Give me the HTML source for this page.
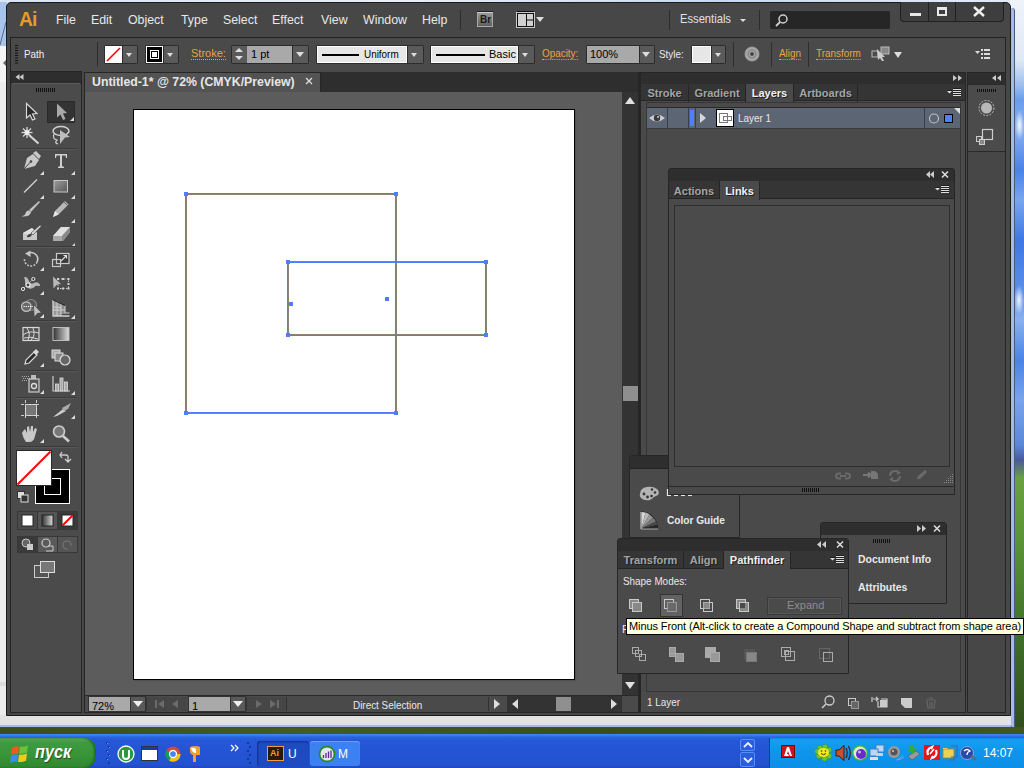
<!DOCTYPE html>
<html><head><meta charset="utf-8">
<style>
*{margin:0;padding:0;box-sizing:border-box}
html,body{width:1024px;height:768px;overflow:hidden;position:relative;font-family:"Liberation Sans",sans-serif;background:#ececec}
.a{position:absolute}
.t{position:absolute;white-space:nowrap;line-height:1}
.menu{color:#e8e8e8;font-size:13px;top:13px}
.orange{color:#f0a040;font-size:11px;border-bottom:1px dotted #f0a040;line-height:11px}
.cw{color:#eee;font-size:11px}
.dd{background:#565656;border:1px solid #2e2e2e}
.tri{width:0;height:0;border-left:5px solid transparent;border-right:5px solid transparent;border-top:6px solid #e0e0e0}
.n9{transform:scaleX(.9);transform-origin:0 0}
.n95{transform:scaleX(.95);transform-origin:0 0}
.tab{position:absolute;font-weight:bold;font-size:11px;color:#a4a4a4;text-align:center;line-height:18px;border-right:1px solid #262626;text-shadow:1px 1px 0 #1e1e1e}
.tab.act{color:#f0f0f0;background:#4a4a4a}
</style></head><body>
<!-- desktop bits -->
<div class="a" style="left:0;top:0;width:1024px;height:3px;background:linear-gradient(90deg,#d8e4f4,#e8eef8 40%,#c8d8f0 70%,#e4ecf8)"></div>
<div class="a" style="left:0;top:2px;width:7px;height:44px;background:#a9c4ea"></div>
<div class="a" style="left:0;top:46px;width:7px;height:36px;background:#f4f4f4"></div>
<div class="a" style="left:3px;top:59px;width:0;height:0;border-top:4px solid transparent;border-bottom:4px solid transparent;border-right:4px solid #6a6a6a"></div>
<svg class="a" style="left:0;top:20px" width="7" height="26"><line x1="0" y1="25" x2="6" y2="2" stroke="#5a6a8a" stroke-width="1"/></svg>
<div class="a" style="left:0;top:682px;width:7px;height:4px;background:#dcdcdc"></div>
<div class="a" style="left:1010px;top:0;width:14px;height:734px;background:linear-gradient(180deg,#eef3fa 0,#dfe9f6 60px,#9ec0f0 85px,#6a9cec 100px,#8ab0f0 130px,#4a82e8 170px,#7aa6ee 200px,#3f78e4 240px,#5a8ee8 290px,#8ab0ee 320px,#4a84e6 360px,#7aa4ec 400px,#5a88d8 445px,#4a5a9a 460px,#6aa040 478px,#5a9438 540px,#44742a 620px,#2f4c1c 734px)"></div>
<div class="a" style="left:1015px;top:110px;width:9px;height:30px;background:radial-gradient(#f6f9ff,transparent 70%)"></div>
<div class="a" style="left:1014px;top:285px;width:10px;height:30px;background:radial-gradient(#f0f6ff,transparent 70%)"></div>
<div class="a" style="left:1010px;top:8px;width:5px;height:721px;background:#a6b8ec;border-right:1px solid #4a5a7a;border-radius:0 3px 3px 0"></div>
<div class="a" style="left:0;top:727px;width:1024px;height:7px;background:linear-gradient(90deg,#34501f,#3f5e24 30%,#33501d 60%,#3a5a22)"></div>
<div class="a" style="left:0;top:715px;width:1011px;height:10px;background:#e2e2e2"></div>
<div class="a" style="left:0;top:725px;width:1012px;height:3px;background:#a6b8ec;border-bottom:1px solid #3a4a6a;border-radius:0 0 3px 0"></div>

<!-- app window frame -->
<div class="a" style="left:6px;top:2px;width:1005px;height:714px;background:#474747;border:1px solid #1a1a1a;border-radius:5px 5px 0 0"></div>

<!-- menu bar -->
<div class="t" style="left:19px;top:8px;font-size:21px;font-weight:bold;color:#e69a2a;letter-spacing:-1px;transform:scaleX(.92);transform-origin:0 0">Ai</div>
<div class="t menu n95" style="left:56px">File</div>
<div class="t menu n95" style="left:91px">Edit</div>
<div class="t menu n95" style="left:128px">Object</div>
<div class="t menu n95" style="left:181px">Type</div>
<div class="t menu n95" style="left:223px">Select</div>
<div class="t menu n95" style="left:272px">Effect</div>
<div class="t menu n95" style="left:321px">View</div>
<div class="t menu n95" style="left:363px">Window</div>
<div class="t menu n95" style="left:422px">Help</div>

<!-- control bar -->
<div class="a" style="left:10px;top:37px;width:996px;height:35px;background:#4a4a4a;border:1px solid #232323;border-bottom:none"></div>


<!-- menubar right -->
<div class="a" style="left:460px;top:10px;width:1px;height:20px;background:#2c2c2c"></div>
<div class="a" style="left:477px;top:12px;width:16px;height:15px;background:linear-gradient(#9a9a9a,#5e5e5e);border:1px solid #aaa;border-top-color:#ccc;box-shadow:0 -1px 0 #222"></div>
<div class="t" style="left:480px;top:15px;font-size:10px;font-weight:bold;color:#1a1a1a">Br</div>
<svg class="a" style="left:516px;top:11px" width="19" height="17"><rect x="1" y="0" width="17" height="1" fill="#111"/><rect x="0" y="1" width="19" height="16" fill="#c8c8c8"/><rect x="1" y="2" width="17" height="14" fill="#111"/><rect x="2" y="3" width="8" height="12" fill="#d0d0d0"/><rect x="11" y="3" width="6" height="5.5" fill="#d0d0d0"/><rect x="11" y="9.5" width="6" height="5.5" fill="#d0d0d0"/></svg>
<div class="a tri" style="left:536px;top:17px;border-width:5px 4px 0 4px;border-top-color:#ddd"></div>
<div class="a" style="left:669px;top:10px;width:1px;height:20px;background:#2c2c2c"></div>
<div class="t" style="left:680px;top:12px;font-size:13px;color:#e0e0e0;transform:scaleX(.86);transform-origin:0 0">Essentials</div>
<div class="a tri" style="left:740px;top:19px;border-width:3px 3px 0 3px;border-top-color:#ddd"></div>
<div class="a" style="left:759px;top:10px;width:1px;height:20px;background:#2c2c2c"></div>
<div class="a" style="left:770px;top:11px;width:120px;height:18px;background:#262626;border-radius:2px"></div>
<svg class="a" style="left:773px;top:12px" width="16" height="16"><circle cx="10" cy="7" r="4" fill="none" stroke="#cfcfcf" stroke-width="1.5"/><line x1="7" y1="10" x2="3" y2="14" stroke="#cfcfcf" stroke-width="1.8"/></svg>
<div class="a" style="left:900px;top:2px;width:104px;height:20px;background:#3e3e3e;border:1px solid #202020;border-top:none;border-radius:0 0 4px 4px"></div>
<div class="a" style="left:928px;top:2px;width:1px;height:19px;background:#202020"></div>
<div class="a" style="left:955px;top:2px;width:1px;height:19px;background:#202020"></div>
<div class="a" style="left:910px;top:13px;width:11px;height:3px;background:#e8e8e8"></div>
<div class="a" style="left:937px;top:7px;width:10px;height:9px;border:2px solid #e8e8e8;border-top-width:3px"></div>
<svg class="a" style="left:973px;top:6px" width="12" height="11"><path d="M1 1 L11 10 M11 1 L1 10" stroke="#eee" stroke-width="2.4"/></svg>

<!-- control bar content -->
<svg class="a" style="left:15px;top:45px" width="3" height="21"><g fill="#111"><rect y="0" width="3" height="1"/><rect y="2.5" width="3" height="1"/><rect y="5" width="3" height="1"/><rect y="7.5" width="3" height="1"/><rect y="10" width="3" height="1"/><rect y="12.5" width="3" height="1"/><rect y="15" width="3" height="1"/><rect y="17.5" width="3" height="1"/></g></svg>
<div class="t cw n9" style="left:24px;top:49px">Path</div>
<div class="a" style="left:97px;top:42px;width:1px;height:25px;background:#2e2e2e"></div>
<div class="a" style="left:104px;top:45px;width:34px;height:19px;background:#2c2c2c;border-radius:2px"></div>
<div class="a" style="left:105px;top:46px;width:17px;height:17px;background:#fff"></div>
<svg class="a" style="left:105px;top:46px" width="17" height="17"><line x1="2" y1="15" x2="15" y2="2" stroke="#f00" stroke-width="1.6"/></svg>
<div class="a" style="left:123px;top:46px;width:14px;height:17px;background:#5a5a5a"></div>
<div class="a tri" style="left:126px;top:53px;border-width:4px 3.5px 0 3.5px;border-top-color:#ddd"></div>
<div class="a" style="left:145px;top:45px;width:34px;height:19px;background:#2c2c2c;border-radius:2px"></div>
<div class="a" style="left:146px;top:46px;width:17px;height:17px;background:#000;border:1px solid #fff"></div>
<div class="a" style="left:150px;top:50px;width:9px;height:9px;border:1px solid #fff;background:#000"></div>
<div class="a" style="left:152px;top:52px;width:5px;height:5px;background:#fff"></div>
<div class="a" style="left:164px;top:46px;width:14px;height:17px;background:#5a5a5a"></div>
<div class="a tri" style="left:167px;top:53px;border-width:4px 3.5px 0 3.5px;border-top-color:#ddd"></div>
<div class="t orange" style="left:191px;top:48px">Stroke:</div>
<div class="a" style="left:231px;top:45px;width:78px;height:19px;background:#2c2c2c;border-radius:2px"></div>
<div class="a" style="left:232px;top:46px;width:15px;height:17px;background:#5a5a5a"></div>
<div class="a" style="left:235px;top:48px;width:0;height:0;border-left:4px solid transparent;border-right:4px solid transparent;border-bottom:4px solid #ddd"></div>
<div class="a tri" style="left:235px;top:56px;border-width:4px 4px 0 4px;border-top-color:#ddd"></div>
<div class="a" style="left:247px;top:46px;width:45px;height:17px;background:#a9a9a9"></div>
<div class="t" style="left:251px;top:49px;font-size:11px;color:#000">1 pt</div>
<div class="a" style="left:293px;top:46px;width:15px;height:17px;background:#5a5a5a"></div>
<div class="a tri" style="left:296px;top:52px;border-width:5px 4.5px 0 4.5px;border-top-color:#ddd"></div>
<div class="a" style="left:316px;top:45px;width:108px;height:19px;background:#2c2c2c;border-radius:2px"></div>
<div class="a" style="left:317px;top:46px;width:90px;height:17px;background:#e6e6e6;border:1px solid #fff"></div>
<div class="a" style="left:322px;top:54px;width:37px;height:2px;background:#000"></div>
<div class="t n9" style="left:364px;top:49px;font-size:11px;color:#000">Uniform</div>
<div class="a" style="left:408px;top:46px;width:15px;height:17px;background:#5a5a5a"></div>
<div class="a tri" style="left:411px;top:53px;border-width:4px 3.5px 0 3.5px;border-top-color:#ddd"></div>
<div class="a" style="left:430px;top:45px;width:105px;height:19px;background:#2c2c2c;border-radius:2px"></div>
<div class="a" style="left:431px;top:46px;width:87px;height:17px;background:#e6e6e6;border:1px solid #fff"></div>
<div class="a" style="left:436px;top:54px;width:49px;height:2px;background:#000"></div>
<div class="t" style="left:489px;top:49px;font-size:11px;color:#000">Basic</div>
<div class="a" style="left:519px;top:46px;width:15px;height:17px;background:#5a5a5a"></div>
<div class="a tri" style="left:522px;top:53px;border-width:4px 3.5px 0 3.5px;border-top-color:#ddd"></div>
<div class="t orange n9" style="left:542px;top:48px">Opacity:</div>
<div class="a" style="left:586px;top:45px;width:69px;height:19px;background:#2c2c2c;border-radius:2px"></div>
<div class="a" style="left:587px;top:46px;width:52px;height:17px;background:#a9a9a9"></div>
<div class="t" style="left:590px;top:49px;font-size:11px;color:#000">100%</div>
<div class="a" style="left:640px;top:46px;width:14px;height:17px;background:#5a5a5a"></div>
<div class="a tri" style="left:642px;top:52px;border-width:5px 4.5px 0 4.5px;border-top-color:#ddd"></div>
<div class="t cw n9" style="left:659px;top:49px;color:#e8e8e8">Style:</div>
<div class="a" style="left:691px;top:45px;width:35px;height:19px;background:#2c2c2c;border-radius:2px"></div>
<div class="a" style="left:692px;top:46px;width:19px;height:17px;background:#e6e6e6;border:1px solid #fff"></div>
<div class="a" style="left:712px;top:46px;width:13px;height:17px;background:#5a5a5a"></div>
<div class="a tri" style="left:715px;top:53px;border-width:4px 3.5px 0 3.5px;border-top-color:#ddd"></div>
<div class="a" style="left:733px;top:42px;width:1px;height:25px;background:#2e2e2e"></div>
<svg class="a" style="left:744px;top:46px" width="16" height="16"><defs><radialGradient id="rc"><stop offset="0" stop-color="#fff"/><stop offset=".5" stop-color="#888"/><stop offset="1" stop-color="#bbb"/></radialGradient></defs><circle cx="8" cy="8" r="7" fill="url(#rc)" stroke="#999"/><circle cx="8" cy="8" r="2" fill="#444"/></svg>
<div class="a" style="left:771px;top:42px;width:1px;height:25px;background:#2e2e2e"></div>
<div class="t orange n9" style="left:779px;top:48px">Align</div>
<div class="a" style="left:808px;top:42px;width:1px;height:25px;background:#2e2e2e"></div>
<div class="t orange n9" style="left:816px;top:48px">Transform</div>
<svg class="a" style="left:871px;top:46px" width="20" height="16"><rect x="1" y="5" width="6" height="6" fill="none" stroke="#bbb"/><rect x="10" y="1" width="8" height="7" fill="#888" stroke="#bbb"/><path d="M6 3 L14 11 L11 11 L13 15 L11 15 L9 12 L7 14 Z" fill="#ccc"/></svg>
<div class="a tri" style="left:894px;top:52px;border-width:6px 4.5px 0 4.5px;border-top-color:#ddd"></div>
<svg class="a" style="left:975px;top:48px" width="16" height="12"><path d="M0 3 L5 3 L2.5 6 Z" fill="#ddd"/><rect x="6" y="1" width="2" height="2" fill="#ddd"/><rect x="6" y="5" width="2" height="2" fill="#ddd"/><rect x="6" y="9" width="2" height="2" fill="#ddd"/><rect x="9" y="1" width="6" height="2" fill="#ddd"/><rect x="9" y="5" width="6" height="2" fill="#ddd"/><rect x="9" y="9" width="6" height="2" fill="#ddd"/></svg>

<!-- tools panel -->
<div class="a" style="left:10px;top:71px;width:72px;height:642px;background:#4b4b4b;border:1px solid #262626"></div>
<div class="a" style="left:11px;top:72px;width:70px;height:12px;background:#2e2e2e"></div>


<div class="a" style="left:12px;top:83px;width:68px;height:1px;background:#5a5a5a"></div>
<div class="a" style="left:47px;top:101px;width:28px;height:22px;background:#333;border:1px solid #2a2a2a"></div>
<svg class="a" style="left:0;top:0" width="90" height="600">
<defs><linearGradient id="gr1" x1="0" y1="0" x2="1" y2="1"><stop offset="0" stop-color="#9a9a9a"/><stop offset="1" stop-color="#5a5a5a"/></linearGradient>
<linearGradient id="gr2" x1="0" y1="0" x2="1" y2="0"><stop offset="0" stop-color="#333"/><stop offset="1" stop-color="#ddd"/></linearGradient></defs>
<g fill="#111"><rect x="36" y="88" width="1" height="4"/><rect x="38" y="88" width="1" height="4"/><rect x="40" y="88" width="1" height="4"/><rect x="42" y="88" width="1" height="4"/><rect x="44" y="88" width="1" height="4"/><rect x="46" y="88" width="1" height="4"/><rect x="48" y="88" width="1" height="4"/><rect x="50" y="88" width="1" height="4"/><rect x="52" y="88" width="1" height="4"/><rect x="54" y="88" width="1" height="4"/></g>
<path d="M15.5 77 L19.5 74 L19.5 80 Z M19.5 77 L23.5 74 L23.5 80 Z" fill="#ccc"/>
<!-- selection -->
<path d="M26.5 103.5 L37 113.5 L32.5 114 L35 119 L32.5 120 L30 115 L26.5 118 Z" fill="#2a2a2a" stroke="#d8d8d8" stroke-width="1.2"/>
<path d="M57 103.5 L67 113 L63 113.5 L65.5 119 L63 120 L60.5 114.5 L57 117.5 Z" fill="#a8a8a8"/>
<path d="M70 121 L74 117 L74 121 Z" fill="#ddd"/>
<!-- magic wand -->
<g stroke="#d8d8d8" stroke-width="1.3"><line x1="29" y1="135" x2="38.5" y2="143.5" stroke-width="2"/><line x1="27" y1="127" x2="27" y2="138"/><line x1="21.5" y1="132.5" x2="32.5" y2="132.5"/><line x1="23" y1="128.5" x2="31" y2="136.5"/><line x1="31" y1="128.5" x2="23" y2="136.5"/></g>
<circle cx="27" cy="132.5" r="2.5" fill="#eee"/>
<!-- lasso -->
<ellipse cx="61" cy="131" rx="8" ry="4.5" fill="none" stroke="#d0d0d0" stroke-width="1.5"/>
<path d="M54 134 Q52 139 57 140 Q54 143 58 144" fill="none" stroke="#d0d0d0" stroke-width="1.2"/>
<path d="M60 130 L70 137 L65 137.5 L60 144 Z" fill="#bdbdbd"/>
<rect x="16" y="148" width="60" height="1" fill="#3a3a3a"/><rect x="16" y="149" width="60" height="1" fill="#575757"/>
<!-- pen -->
<path d="M24 169 L27 158 L33 154 L39 160 L35 166 Z" fill="#c8c8c8"/><path d="M33 153 L36 151 L41 156 L39 159 Z" fill="#c8c8c8"/>
<path d="M24 169 L30.5 162" stroke="#444" stroke-width="1"/><circle cx="31" cy="161.5" r="1.3" fill="#444"/>
<path d="M40 175 L44 171 L44 175 Z" fill="#ddd"/>
<!-- type -->
<path d="M55 154 L67 154 L67 158 L66 158 L65.5 155.5 L62 155.5 L62 166 L64 167 L64 168 L58 168 L58 167 L60 166 L60 155.5 L56.5 155.5 L56 158 L55 158 Z" fill="#cfcfcf"/>
<path d="M71 175 L75 171 L75 175 Z" fill="#ddd"/>
<!-- line -->
<line x1="24" y1="192.5" x2="37" y2="179.5" stroke="#cfcfcf" stroke-width="1.5"/>
<path d="M40 199 L44 195 L44 199 Z" fill="#ddd"/>
<!-- rect -->
<rect x="54" y="180.5" width="13.5" height="11.5" fill="url(#gr1)" stroke="#c8c8c8" stroke-width="1"/>
<path d="M71 199 L75 195 L75 199 Z" fill="#ddd"/>
<!-- brush -->
<path d="M29 210 L39 201 L40 202 L31 212 Z" fill="#c0c0c0"/><path d="M22 216 Q25 216 26 212 Q28 209 31 212 Q30 217 22 216.5 Z" fill="#c8c8c8"/>
<!-- pencil -->
<path d="M53 217 L55 211 L65 201 L68.5 204.5 L58.5 214.5 Z" fill="#b8b8b8"/><path d="M53 217 L55 211 L58.5 214.5 Z" fill="#e8e8e8"/><path d="M64 202 L67.5 205.5" stroke="#666"/>
<path d="M71 223 L75 219 L75 223 Z" fill="#ddd"/>
<!-- blob brush -->
<path d="M23 233 L32 228 L37 233 L37 240 L23 240 Z" fill="#c8c8c8"/><path d="M23 233 L32 228 L37 233 L32 236 Z" fill="#e0e0e0"/>
<path d="M31 233 L40 225 L41.5 226 L33 235 Z" fill="#d8d8d8" stroke="#333" stroke-width=".6"/><path d="M27 236 Q29 233 32 234 Q31 238 27 237 Z" fill="#444"/>
<!-- eraser -->
<path d="M53 236 L61 227 L70 227 L70 232 L63 241 L53 241 Z" fill="#a8a8a8"/><path d="M53 236 L61 227 L70 227 L62 236 Z" fill="#e0e0e0"/><path d="M62 236 L70 227 L70 232 L63 241 L62 241 Z" fill="#888"/>
<path d="M71 247 L75 243 L75 247 Z" fill="#ddd"/>
<rect x="16" y="246" width="60" height="1" fill="#3a3a3a"/><rect x="16" y="247" width="60" height="1" fill="#575757"/>
<!-- rotate -->
<path d="M29 253 A6.5 6.5 0 0 1 37 262" fill="none" stroke="#c8c8c8" stroke-width="1.6"/>
<path d="M37 262 A6.5 6.5 0 0 1 24.5 259" fill="none" stroke="#c8c8c8" stroke-width="1.6" stroke-dasharray="1.8 1.4"/>
<path d="M25 253.5 L30.5 250.5 L30.5 257 Z" fill="#c8c8c8"/>
<path d="M40 271 L44 267 L44 271 Z" fill="#ddd"/>
<!-- scale -->
<rect x="56.5" y="253.5" width="12.5" height="10" fill="#3a3a3a" stroke="#c8c8c8" stroke-width="1.2"/>
<rect x="52.5" y="259.5" width="8" height="7" fill="none" stroke="#c8c8c8" stroke-width="1.2"/>
<path d="M61 261 L66.5 255.5 M63.5 255.5 L66.5 255.5 L66.5 258.5" stroke="#e0e0e0" stroke-width="1.1" fill="none"/>
<path d="M71 271 L75 267 L75 271 Z" fill="#ddd"/>
<!-- puppet warp -->
<path d="M24 277.5 Q27 276 28.5 280 Q30 285 34 283 Q37 281 40 284.5 Q40 287 38.5 286 Q36 285 34.5 287 Q31 290 28 288 Q25 285.5 25 281 Q25 279 24 277.5 Z" fill="#b8b8b8"/>
<path d="M23 289 L33 279" stroke="#ddd" stroke-width="1" stroke-dasharray="1 1"/>
<circle cx="23" cy="289" r="1.6" fill="#444" stroke="#e8e8e8" stroke-width="1"/>
<circle cx="28" cy="285" r="2" fill="#444" stroke="#e8e8e8" stroke-width="1.2"/>
<circle cx="33.3" cy="279" r="1.6" fill="#444" stroke="#e8e8e8" stroke-width="1"/>
<path d="M40 295 L44 291 L44 295 Z" fill="#ddd"/>
<!-- free transform -->
<rect x="58" y="279" width="10.5" height="9.5" fill="none" stroke="#c8c8c8" stroke-width="1" stroke-dasharray="1.5 1.5"/>
<g fill="#d0d0d0"><rect x="57" y="278" width="2" height="2"/><rect x="62" y="278" width="2" height="2"/><rect x="67.5" y="278" width="2" height="2"/><rect x="67.5" y="283" width="2" height="2"/><rect x="67.5" y="287.5" width="2" height="2"/><rect x="62" y="287.5" width="2" height="2"/><rect x="57" y="287.5" width="2" height="2"/></g>
<path d="M53 276.5 L61 284 L57 284.5 L53.5 288.5 Z" fill="#b8b8b8"/>
<!-- shape builder -->
<circle cx="31" cy="305" r="5.5" fill="#555" stroke="#8a8a8a" stroke-width="1.2"/>
<circle cx="26.3" cy="306.6" r="4.8" fill="#6a6a6a" stroke="#c0c0c0" stroke-width="1.2"/>
<path d="M23.5 306.5 L33 306.5" stroke="#fff" stroke-width="1.2" stroke-dasharray="1.2 1"/>
<path d="M34 305.5 L41 312.5 L37.5 313 L34.5 316.5 Z" fill="#c0c0c0"/>
<path d="M40 318 L44 314 L44 318 Z" fill="#ddd"/>
<!-- perspective grid -->
<path d="M53 300 L61 303.5 L61 316 L53 316 Z" fill="#9a9a9a"/>
<path d="M61 304 L65 305.5 L65 312 L61 312 Z" fill="#8a8a8a"/>
<path d="M53 300 L53 316 L69.5 316" fill="none" stroke="#d0d0d0" stroke-width="1.3"/>
<path d="M57 301.5 L57 316 M61 303.5 L61 316 M65 305.5 L65 313 M53 307 L61 307.5 M53 310 L65 310 M61 313 L69.5 313" stroke="#d0d0d0" stroke-width="1"/>
<path d="M53 300 L65 305.5" stroke="#222" stroke-width="1"/>
<path d="M71 319 L75 315 L75 319 Z" fill="#ddd"/>
<rect x="16" y="320" width="60" height="1" fill="#3a3a3a"/><rect x="16" y="321" width="60" height="1" fill="#575757"/>
<!-- mesh -->
<rect x="23" y="327.5" width="16" height="13" fill="#555" stroke="#d8d8d8" stroke-width="1.2"/>
<path d="M23 335 Q29 330 39 333 M27 328 Q31 334 28 340 M33 328 Q36 335 31 340 M24 338 Q31 336 38 339" stroke="#d8d8d8" fill="none" stroke-width="1"/>
<!-- gradient -->
<rect x="53" y="327.5" width="16" height="13" fill="url(#gr2)" stroke="#bbb" stroke-width="1"/>
<!-- eyedropper -->
<path d="M25 364 L26 360 L34 352 L37 355 L29 363 Z" fill="#2a2a2a" stroke="#d8d8d8" stroke-width="1.2"/><path d="M33 352 L36 349 L39 352 L36 355 Z" fill="#d8d8d8"/>
<path d="M40 367 L44 363 L44 367 Z" fill="#ddd"/>
<!-- blend -->
<rect x="52" y="350" width="8" height="8" fill="#aaa" stroke="#ddd"/><rect x="55" y="353" width="8" height="8" fill="#888" stroke="#ddd"/><circle cx="65" cy="360" r="5" fill="#666" stroke="#ddd" stroke-width="1.2"/>
<rect x="16" y="370" width="60" height="1" fill="#3a3a3a"/><rect x="16" y="371" width="60" height="1" fill="#575757"/>
<!-- symbol sprayer -->
<g fill="#aaa"><rect x="22" y="376" width="1" height="1"/><rect x="24" y="376" width="1" height="1"/><rect x="26" y="376" width="1" height="1"/><rect x="28" y="376" width="1" height="1"/><rect x="23" y="378" width="1" height="1"/><rect x="25" y="378" width="1" height="1"/><rect x="27" y="378" width="1" height="1"/><rect x="29" y="378" width="1" height="1"/><rect x="22" y="380" width="1" height="1"/><rect x="24" y="380" width="1" height="1"/><rect x="26" y="380" width="1" height="1"/></g>
<rect x="31" y="375" width="5" height="4" fill="#bbb"/><rect x="29" y="379" width="10" height="13" fill="#555" stroke="#ccc" stroke-width="1.2"/><circle cx="34" cy="386" r="2.5" fill="none" stroke="#ddd" stroke-width="1.3"/>
<path d="M40 394 L44 390 L44 394 Z" fill="#ddd"/>
<!-- column graph -->
<path d="M53 376 L53 391 L70 391" fill="none" stroke="#ccc" stroke-width="1.2"/>
<rect x="55.5" y="384" width="3" height="7" fill="#aaa" stroke="#ddd" stroke-width=".8"/><rect x="60" y="378" width="3" height="13" fill="#aaa" stroke="#ddd" stroke-width=".8"/><rect x="64.5" y="382" width="3" height="9" fill="#aaa" stroke="#ddd" stroke-width=".8"/>
<path d="M71 395 L75 391 L75 395 Z" fill="#ddd"/>
<rect x="16" y="397" width="60" height="1" fill="#3a3a3a"/><rect x="16" y="398" width="60" height="1" fill="#575757"/>
<!-- artboard -->
<rect x="25.5" y="404.5" width="11" height="11" fill="#777" stroke="#ddd"/>
<path d="M21 404.5 L40.5 404.5 M21 415.5 L40.5 415.5 M25.5 400 L25.5 419 M36.5 400 L36.5 419" stroke="#ccc" stroke-dasharray="3 2"/>
<!-- slice -->
<path d="M53 417 L63 409 L66 411 L57 416 Z" fill="#ccc"/><path d="M62 408 L71 403 L68 409 L64 411 Z" fill="#aaa"/>
<path d="M71 419 L75 415 L75 419 Z" fill="#ddd"/>
<!-- hand -->
<path d="M24 430 L25 429 L27 433 L27 427 L29 426 L30 432 L31 426 L33 426 L33 432 L35 428 L37 429 L35 436 Q34 442 29 442 L26 442 Q23 438 22 433 Z" fill="#c8c8c8"/>
<path d="M40 443 L44 439 L44 443 Z" fill="#ddd"/>
<!-- zoom -->
<circle cx="59" cy="431.5" r="5.5" fill="#777" stroke="#cfcfcf" stroke-width="1.6"/><line x1="63" y1="436" x2="69" y2="441.5" stroke="#cfcfcf" stroke-width="2.5"/>
<rect x="16" y="446" width="60" height="1" fill="#3a3a3a"/><rect x="16" y="447" width="60" height="1" fill="#575757"/>
<!-- fill/stroke -->
<rect x="35" y="469" width="35" height="35" fill="#fff"/><rect x="36" y="470" width="33" height="33" fill="#000"/><rect x="44" y="478" width="17" height="17" fill="#fff"/><rect x="45" y="479" width="15" height="15" fill="#000"/>
<rect x="16" y="450" width="36" height="36" fill="#2a2a2a"/><rect x="17" y="451" width="34" height="34" fill="#fff"/>
<line x1="17.5" y1="484.5" x2="50.5" y2="451.5" stroke="#f00" stroke-width="2"/>
<path d="M62 452 L60 455 L62 458 M60 455 L66 455 Q68 455 68 457 L68 462 M65 459 L68 462 L71 459" stroke="#ccc" stroke-width="1.3" fill="none"/>
<rect x="17.5" y="491.5" width="7" height="7" fill="#ddd" stroke="#333"/><rect x="21" y="495" width="7" height="7" fill="#333" stroke="#ddd"/>
<!-- mode buttons -->
<rect x="17" y="511" width="61" height="19" fill="#383838"/>
<rect x="18" y="512" width="19" height="17" fill="#4a4a4a"/><rect x="38" y="512" width="19" height="17" fill="#555"/><rect x="58" y="512" width="19" height="17" fill="#3a3a3a"/>
<rect x="22" y="515" width="11" height="11" fill="#fff" stroke="#222"/>
<rect x="42" y="515" width="11" height="11" fill="url(#gr2)" stroke="#222"/>
<rect x="62" y="515" width="11" height="11" fill="#fff" stroke="#222"/><line x1="62.5" y1="525.5" x2="72.5" y2="515.5" stroke="#f00" stroke-width="2"/>
<rect x="17" y="536" width="61" height="17" fill="#383838"/>
<rect x="18" y="537" width="19" height="15" fill="#3a3a3a"/><rect x="38" y="537" width="19" height="15" fill="#5a5a5a"/><rect x="58" y="537" width="19" height="15" fill="#555"/>
<circle cx="26" cy="543" r="4" fill="#666" stroke="#ccc"/><rect x="27" y="544" width="6" height="6" fill="#ccc"/>
<circle cx="46" cy="543" r="4" fill="none" stroke="#ccc" stroke-width="1.2"/><path d="M48 546 L53 546 L53 551 L46 551" fill="none" stroke="#ccc"/>
<circle cx="67" cy="545" r="4" fill="none" stroke="#777" stroke-width="1.2"/><rect x="67" y="545" width="4" height="4" fill="#555"/>
<!-- screen mode -->
<rect x="34.5" y="565.5" width="14" height="12" fill="#555" stroke="#ccc"/><rect x="40.5" y="561.5" width="14" height="11" fill="#777" stroke="#ddd"/>
</svg>

<!-- document window -->
<div class="a" style="left:84px;top:72px;width:555px;height:641px;background:#5c5c5c;border:1px solid #262626"></div>
<div class="a" style="left:85px;top:72px;width:553px;height:20px;background:#2e2e2e"></div>
<div class="a" style="left:84px;top:72px;width:237px;height:20px;background:#535353;border:1px solid #262626;border-bottom:none"></div>
<div class="t" style="left:92px;top:76px;font-size:12.3px;font-weight:bold;color:#e6e6e6">Untitled-1* @ 72% (CMYK/Preview)</div>
<svg class="a" style="left:305px;top:77px" width="9" height="9"><path d="M1 1 L7 7 M7 1 L1 7" stroke="#ddd" stroke-width="1.3"/></svg>
<!-- artboard -->
<div class="a" style="left:133px;top:109px;width:442px;height:571px;background:#fff;border:1px solid #000;box-shadow:1px 1px 1px rgba(0,0,0,.12)"></div>
<svg class="a" style="left:0;top:0" width="640" height="700">
<g fill="none" stroke="#8a8478" stroke-width="1"><rect x="186.5" y="194.5" width="210" height="219"/><rect x="288.5" y="261.5" width="198" height="73"/></g>
<g fill="none" stroke="#4f7dff" stroke-width="1"><rect x="185.5" y="193.5" width="210" height="219"/><rect x="287.5" y="262.5" width="198" height="73"/></g>
<g fill="#4f7dff"><rect x="184" y="192" width="4" height="4"/><rect x="394" y="192" width="4" height="4"/><rect x="184" y="411" width="4" height="4"/><rect x="394" y="411" width="4" height="4"/>
<rect x="286" y="260" width="4" height="4"/><rect x="484" y="260" width="4" height="4"/><rect x="286" y="333" width="4" height="4"/><rect x="484" y="333" width="4" height="4"/>
<rect x="289" y="302" width="4" height="4"/><rect x="385" y="297" width="4" height="4"/></g>
</svg>
<!-- vscroll -->
<div class="a" style="left:622px;top:92px;width:16px;height:604px;background:#333"></div>
<div class="a" style="left:625px;top:97px;width:0;height:0;border-left:5px solid transparent;border-right:5px solid transparent;border-bottom:7px solid #e0e0e0"></div>
<div class="a" style="left:625px;top:682px;width:0;height:0;border-left:5px solid transparent;border-right:5px solid transparent;border-top:7px solid #e0e0e0"></div>
<div class="a" style="left:623px;top:386px;width:15px;height:15px;background:#8f8f8f"></div>
<!-- status bar -->
<div class="a" style="left:85px;top:695px;width:553px;height:17px;background:#4a4a4a;border-top:1px solid #2a2a2a"></div>
<div class="a" style="left:88px;top:696px;width:58px;height:16px;background:#333"></div>
<div class="a" style="left:89px;top:697px;width:41px;height:14px;background:#a9a9a9"></div>
<div class="t" style="left:92px;top:701px;font-size:11px;color:#000">72%</div>
<div class="a" style="left:131px;top:697px;width:14px;height:14px;background:#595959"></div>
<div class="a tri" style="left:133px;top:701px;border-width:6px 5px 0 5px;border-top-color:#eee"></div>
<div class="a" style="left:146px;top:697px;width:41px;height:14px;background:#464646;border-left:1px solid #333"></div>
<svg class="a" style="left:150px;top:698px" width="40" height="12"><rect x="5" y="2" width="2" height="8" fill="#6a6a6a"/><path d="M14 2 L8 6 L14 10 Z M28 2 L22 6 L28 10 Z" fill="#6a6a6a"/></svg>
<div class="a" style="left:188px;top:696px;width:58px;height:16px;background:#333"></div>
<div class="a" style="left:189px;top:697px;width:41px;height:14px;background:#a9a9a9"></div>
<div class="t" style="left:192px;top:701px;font-size:11px;color:#000">1</div>
<div class="a" style="left:231px;top:697px;width:14px;height:14px;background:#595959"></div>
<div class="a tri" style="left:233px;top:701px;border-width:6px 5px 0 5px;border-top-color:#eee"></div>
<div class="a" style="left:246px;top:697px;width:41px;height:14px;background:#464646;border-left:1px solid #333;border-right:1px solid #333"></div>
<svg class="a" style="left:250px;top:698px" width="40" height="12"><path d="M6 2 L12 6 L6 10 Z M20 2 L26 6 L20 10 Z" fill="#6a6a6a"/><rect x="27" y="2" width="2" height="8" fill="#6a6a6a"/></svg>
<div class="t n9" style="left:353px;top:700px;font-size:11px;color:#e8e8e8">Direct Selection</div>
<div class="a" style="left:488px;top:697px;width:19px;height:14px;background:#4a4a4a;border-left:1px solid #333"></div>
<div class="a" style="left:494px;top:699px;width:0;height:0;border-top:5px solid transparent;border-bottom:5px solid transparent;border-left:6px solid #ddd"></div>
<div class="a" style="left:507px;top:696px;width:115px;height:16px;background:#333"></div>
<div class="a" style="left:512px;top:699px;width:0;height:0;border-top:5px solid transparent;border-bottom:5px solid transparent;border-right:6px solid #ddd"></div>
<div class="a" style="left:611px;top:699px;width:0;height:0;border-top:5px solid transparent;border-bottom:5px solid transparent;border-left:6px solid #ddd"></div>
<div class="a" style="left:556px;top:697px;width:15px;height:14px;background:#8f8f8f"></div>
<div class="a" style="left:622px;top:696px;width:16px;height:16px;background:#4a4a4a"></div>

<!-- panel dock -->
<div class="a" style="left:638px;top:72px;width:2px;height:641px;background:#262626"></div>
<div class="a" style="left:640px;top:72px;width:326px;height:641px;background:#4a4a4a;border:1px solid #262626"></div>
<div class="a" style="left:641px;top:73px;width:324px;height:11px;background:#2e2e2e"></div>
<svg class="a" style="left:952px;top:74px" width="12" height="8"><path d="M1 1 L5 4 L1 7 Z M6 1 L10 4 L6 7 Z" fill="#ccc"/></svg>
<div class="a" style="left:641px;top:84px;width:324px;height:17px;background:#353535;border-bottom:1px solid #262626"></div>
<div class="tab" style="left:641px;top:84px;width:48px">Stroke</div>
<div class="tab" style="left:689px;top:84px;width:57px">Gradient</div>
<div class="tab act" style="left:746px;top:84px;width:48px;height:18px">Layers</div>
<div class="tab" style="left:794px;top:84px;width:64px">Artboards</div>
<svg class="a" style="left:947px;top:87px" width="16" height="10"><rect x="6" y="1" width="8" height="8" fill="#111" opacity=".6"/><rect x="0" y="3" width="5" height="1" fill="#111" opacity=".6"/><path d="M0 4 L5 4 L2.5 6.5 Z" fill="#ddd"/><rect x="6" y="2" width="8" height="1" fill="#ddd"/><rect x="6" y="4" width="8" height="1" fill="#ddd"/><rect x="6" y="6" width="8" height="1" fill="#ddd"/><rect x="6" y="8" width="8" height="1" fill="#ddd"/></svg>
<div class="a" style="left:646px;top:102px;width:315px;height:590px;border:1px solid #363636;background:#4a4a4a"></div>
<div class="a" style="left:647px;top:107px;width:313px;height:22px;background:#5c6574;border-top:1px solid #2a2a2a;border-bottom:1px solid #3a3a3a"></div>
<div class="a" style="left:667px;top:108px;width:1px;height:20px;background:#3a404a"></div>
<div class="a" style="left:688px;top:108px;width:1px;height:20px;background:#3a404a"></div>
<div class="a" style="left:690px;top:110px;width:4px;height:16px;background:#4f80ff"></div>
<div class="a" style="left:695px;top:108px;width:1px;height:20px;background:#3a404a"></div>
<div class="a" style="left:924px;top:108px;width:1px;height:20px;background:#3a404a"></div>
<svg class="a" style="left:648px;top:111px" width="18" height="14"><path d="M1 7 Q9 0 17 7 Q9 14 1 7 Z" fill="#cfcfcf"/><circle cx="9" cy="7" r="3.2" fill="#3a3a3a"/><circle cx="10" cy="6" r="1" fill="#ccc"/></svg>
<div class="a" style="left:700px;top:113px;width:0;height:0;border-top:5px solid transparent;border-bottom:5px solid transparent;border-left:6px solid #d8d8d8"></div>
<div class="a" style="left:716px;top:109px;width:18px;height:18px;background:#fff;border:1px solid #000"></div>
<svg class="a" style="left:717px;top:110px" width="16" height="16"><rect x="2.5" y="3.5" width="8" height="9" fill="none" stroke="#777"/><rect x="6.5" y="6.5" width="8" height="4" fill="none" stroke="#777"/></svg>
<div class="a" style="left:954px;top:108px;width:0;height:0;border-left:6px solid transparent;border-top:6px solid #ddd"></div>
<div class="t n9" style="left:738px;top:113px;font-size:11px;color:#e8e8e8">Layer 1</div>
<svg class="a" style="left:926px;top:110px" width="34" height="18"><circle cx="8" cy="8.5" r="4.5" fill="none" stroke="#c0c0c0" stroke-width="1.2"/><rect x="18.5" y="4.5" width="8" height="8" fill="#4f80ff" stroke="#000"/></svg>
<div class="t n9" style="left:647px;top:697px;font-size:11px;color:#e8e8e8">1 Layer</div>
<svg class="a" style="left:820px;top:694px" width="124" height="16"><circle cx="9.5" cy="6.5" r="4.5" fill="none" stroke="#ccc" stroke-width="1.3"/><line x1="6" y1="10" x2="2" y2="14" stroke="#ccc" stroke-width="1.6"/>
<rect x="28.5" y="4.5" width="7" height="7" fill="none" stroke="#ccc"/><rect x="31.5" y="7.5" width="7" height="7" fill="#666" stroke="#999"/>
<path d="M53 5 L58 5 L56 3 M58 5 L56 7 M52 3 L52 8 M58 7 L58 13 L67 13 L67 5 L61 5" fill="none" stroke="#ccc" stroke-width="1.2"/><rect x="60" y="6" width="7" height="7" fill="#ccc"/>
<rect x="81" y="4" width="11" height="10" fill="#ccc"/><path d="M81 10 L85 14 L81 14 Z" fill="#4a4a4a"/>
<path d="M106 6 L116 6 M109 4 L113 4 M107 7 L108 14 L114 14 L115 7 M110 8 L110 13 M112 8 L112 13" fill="none" stroke="#666" stroke-width="1.2"/></svg>

<!-- right iconic dock -->
<div class="a" style="left:967px;top:72px;width:39px;height:641px;background:#474747;border:1px solid #262626"></div>
<div class="a" style="left:968px;top:73px;width:37px;height:11px;background:#2e2e2e"></div>
<svg class="a" style="left:991px;top:74px" width="12" height="8"><path d="M5 1 L1 4 L5 7 Z M10 1 L6 4 L10 7 Z" fill="#ccc"/></svg>
<div class="a" style="left:968px;top:84px;width:37px;height:68px;background:#4b4b4b;border-bottom:1px solid #2a2a2a;border-top:1px solid #2a2a2a"></div>
<svg class="a" style="left:968px;top:84px" width="37" height="68"><g fill="#111"><rect x="9" y="5" width="1" height="3"/><rect x="11" y="5" width="1" height="3"/><rect x="13" y="5" width="1" height="3"/><rect x="15" y="5" width="1" height="3"/><rect x="17" y="5" width="1" height="3"/><rect x="19" y="5" width="1" height="3"/><rect x="21" y="5" width="1" height="3"/><rect x="23" y="5" width="1" height="3"/><rect x="25" y="5" width="1" height="3"/><rect x="27" y="5" width="1" height="3"/></g>
<circle cx="18.5" cy="24" r="7.5" fill="none" stroke="#bbb" stroke-dasharray="2 1.3"/><circle cx="18.5" cy="24" r="5.5" fill="#b8b8b8"/>
<rect x="14.5" y="45.5" width="10" height="10" fill="none" stroke="#ccc" stroke-width="1.2"/><rect x="8.5" y="52.5" width="5" height="5" fill="#555" stroke="#ccc"/><rect x="11.5" y="55.5" width="5" height="5" fill="#888" stroke="#ccc"/></svg>

<!-- color group (iconic floating) -->
<div class="a" style="left:629px;top:455px;width:111px;height:83px;background:#4a4a4a;border:1px solid #262626;border-radius:3px 3px 0 0"></div>
<div class="a" style="left:630px;top:456px;width:109px;height:13px;background:#2e2e2e;border-bottom:1px solid #222"></div>
<svg class="a" style="left:636px;top:482px" width="26" height="52"><defs><linearGradient id="fan" x1="0" y1="0" x2="1" y2="1"><stop offset="0" stop-color="#d0d0d0"/><stop offset="1" stop-color="#202020"/></linearGradient></defs>
<path d="M4 12 Q4 6 11 5 Q17 4 21 7 Q24 10 22 13 Q20 14 18 15 Q16 17 14 18 Q8 19 5 16 Q3 14 4 12 Z" fill="#b4b4b4"/>
<circle cx="8" cy="12" r="1.4" fill="#333"/><circle cx="11.5" cy="15" r="1.4" fill="#333"/><circle cx="15.5" cy="14" r="1.3" fill="#333"/><circle cx="19" cy="10.5" r="1.3" fill="#333"/><circle cx="16" cy="7.5" r="1.2" fill="#333"/>
<path d="M5 47 L5 29.5 A17 17 0 0 1 22 46.5 Z" fill="#1a1a1a"/>
<path d="M5.5 46.5 L5.5 30 A16.5 16.5 0 0 1 9.5 30.5 Z" fill="#d8d8d8"/>
<path d="M5.5 46.5 L9.5 30.5 A16.5 16.5 0 0 1 13.5 32.5 Z" fill="#b8b8b8"/>
<path d="M5.5 46.5 L13.5 32.5 A16.5 16.5 0 0 1 17 35.5 Z" fill="#999"/>
<path d="M5.5 46.5 L17 35.5 A16.5 16.5 0 0 1 20 39.5 Z" fill="#777"/>
<path d="M5.5 46.5 L20 39.5 A16.5 16.5 0 0 1 21.5 43 Z" fill="#4a4a4a"/>
<path d="M5.5 46.5 L21.5 43 A16.5 16.5 0 0 1 22 46.5 Z" fill="#2a2a2a"/>
<path d="M5 47 L22 47" stroke="#aaa"/><path d="M5 30 L5 47" stroke="#ccc"/></svg>
<div class="t n95" style="left:667px;top:515px;font-size:11px;font-weight:bold;color:#e8e8e8;transform:scaleX(.92)">Color Guide</div>

<!-- links panel -->
<div class="a" style="left:668px;top:168px;width:287px;height:327px;background:#4a4a4a;border:1px solid #262626;border-radius:3px 3px 0 0"></div>
<div class="a" style="left:669px;top:169px;width:285px;height:12px;background:#2e2e2e"></div>
<svg class="a" style="left:920px;top:170px" width="34" height="10"><path d="M10 1 L6 4.5 L10 8 Z M14 1 L10 4.5 L14 8 Z" fill="#ccc"/><path d="M22 1.5 L28 7.5 M28 1.5 L22 7.5" stroke="#ddd" stroke-width="1.5"/></svg>
<div class="a" style="left:669px;top:181px;width:285px;height:18px;background:#353535;border-bottom:1px solid #262626"></div>
<div class="tab" style="left:669px;top:181px;width:51px;height:18px;line-height:20px">Actions</div>
<div class="tab act" style="left:720px;top:181px;width:40px;height:19px;line-height:20px">Links</div>
<svg class="a" style="left:935px;top:184px" width="16" height="10"><rect x="6" y="1" width="8" height="8" fill="#111" opacity=".6"/><rect x="0" y="3" width="5" height="1" fill="#111" opacity=".6"/><path d="M0 4 L5 4 L2.5 6.5 Z" fill="#ddd"/><rect x="6" y="2" width="8" height="1" fill="#ddd"/><rect x="6" y="4" width="8" height="1" fill="#ddd"/><rect x="6" y="6" width="8" height="1" fill="#ddd"/><rect x="6" y="8" width="8" height="1" fill="#ddd"/></svg>
<div class="a" style="left:674px;top:205px;width:276px;height:262px;background:#4b4b4b;border:1px solid #2e2e2e"></div>
<svg class="a" style="left:833px;top:468px" width="122" height="18"><path d="M8 5.5 L6 5.5 Q3 5.5 3 8 Q3 10.5 6 10.5 L8 10.5 M12 5.5 L14 5.5 Q17 5.5 17 8 Q17 10.5 14 10.5 L12 10.5 M7 8 L13 8" fill="none" stroke="#6a6a6a" stroke-width="2"/>
<path d="M30 7 L37 7 M35 4.5 L38 7 L35 9.5" fill="none" stroke="#777" stroke-width="2"/><path d="M38 3 L42 3 L45 6 L45 11 L38 11 Z" fill="#777"/>
<path d="M57 8 A5 5 0 0 1 66 5 M67 8 A5 5 0 0 1 58 11" fill="none" stroke="#6a6a6a" stroke-width="2"/><path d="M64 2 L68 5 L64 7 Z M60 9 L56 11 L60 14 Z" fill="#6a6a6a"/>
<path d="M84 11 L85 8 L92 2 L94 4 L87 11 Z" fill="#6a6a6a"/><path d="M83.5 11.5 L85 8.5 L86.5 10 Z" fill="#6a6a6a"/>
<g fill="#888"><rect x="119" y="6" width="1" height="1"/><rect x="117" y="8" width="1" height="1"/><rect x="119" y="8" width="1" height="1"/><rect x="115" y="10" width="1" height="1"/><rect x="117" y="10" width="1" height="1"/><rect x="119" y="10" width="1" height="1"/><rect x="113" y="12" width="1" height="1"/><rect x="115" y="12" width="1" height="1"/><rect x="117" y="12" width="1" height="1"/><rect x="119" y="12" width="1" height="1"/><rect x="111" y="14" width="1" height="1"/><rect x="113" y="14" width="1" height="1"/><rect x="115" y="14" width="1" height="1"/><rect x="117" y="14" width="1" height="1"/><rect x="119" y="14" width="1" height="1"/></g></svg>
<div class="a" style="left:669px;top:486px;width:285px;height:8px;background:#4a4a4a;border-top:1px solid #2a2a2a"></div>
<svg class="a" style="left:800px;top:488px" width="24" height="5"><g fill="#111"><rect x="2" y="0" width="1" height="4"/><rect x="4" y="0" width="1" height="4"/><rect x="6" y="0" width="1" height="4"/><rect x="8" y="0" width="1" height="4"/><rect x="10" y="0" width="1" height="4"/><rect x="12" y="0" width="1" height="4"/><rect x="14" y="0" width="1" height="4"/><rect x="16" y="0" width="1" height="4"/><rect x="18" y="0" width="1" height="4"/></g></svg>
<svg class="a" style="left:666px;top:489px" width="28" height="8"><path d="M1.5 0 L1.5 6.5 L5 6.5 M8 6.5 L12 6.5 M15 6.5 L19 6.5 M22 6.5 L26 6.5" stroke="#e8e8e8" stroke-width="1.2" fill="none"/></svg>

<!-- doc info panel -->
<div class="a" style="left:820px;top:522px;width:127px;height:82px;background:#4a4a4a;border:1px solid #262626;border-radius:3px 3px 0 0"></div>
<div class="a" style="left:821px;top:523px;width:125px;height:12px;background:#2e2e2e"></div>
<svg class="a" style="left:915px;top:524px" width="32" height="10"><path d="M2 1 L6 4.5 L2 8 Z M7 1 L11 4.5 L7 8 Z" fill="#ccc"/><path d="M19 1.5 L25 7.5 M25 1.5 L19 7.5" stroke="#ddd" stroke-width="1.5"/></svg>
<svg class="a" style="left:872px;top:539px" width="22" height="5"><g fill="#111"><rect x="1" y="0" width="1" height="4"/><rect x="3" y="0" width="1" height="4"/><rect x="5" y="0" width="1" height="4"/><rect x="7" y="0" width="1" height="4"/><rect x="9" y="0" width="1" height="4"/><rect x="11" y="0" width="1" height="4"/><rect x="13" y="0" width="1" height="4"/><rect x="15" y="0" width="1" height="4"/><rect x="17" y="0" width="1" height="4"/></g></svg>
<div class="t n95" style="left:858px;top:554px;font-size:11px;font-weight:bold;color:#e8e8e8">Document Info</div>
<div class="t n95" style="left:858px;top:582px;font-size:11px;font-weight:bold;color:#e8e8e8">Attributes</div>

<!-- pathfinder panel -->
<div class="a" style="left:617px;top:538px;width:232px;height:136px;background:#4a4a4a;border:1px solid #262626;border-radius:3px 3px 0 0"></div>
<div class="a" style="left:618px;top:539px;width:230px;height:12px;background:#2e2e2e"></div>
<svg class="a" style="left:815px;top:540px" width="34" height="10"><path d="M6 1 L2 4.5 L6 8 Z M11 1 L7 4.5 L11 8 Z" fill="#ccc"/><path d="M22 1.5 L28 7.5 M28 1.5 L22 7.5" stroke="#ddd" stroke-width="1.5"/></svg>
<div class="a" style="left:618px;top:551px;width:230px;height:18px;background:#353535;border-bottom:1px solid #262626"></div>
<div class="tab" style="left:618px;top:551px;width:66px;height:17px;line-height:19px">Transform</div>
<div class="tab" style="left:684px;top:551px;width:40px;height:17px;line-height:19px">Align</div>
<div class="tab act" style="left:724px;top:551px;width:67px;height:18px;line-height:19px">Pathfinder</div>
<svg class="a" style="left:830px;top:554px" width="16" height="10"><rect x="6" y="1" width="8" height="8" fill="#111" opacity=".6"/><rect x="0" y="3" width="5" height="1" fill="#111" opacity=".6"/><path d="M0 4 L5 4 L2.5 6.5 Z" fill="#ddd"/><rect x="6" y="2" width="8" height="1" fill="#ddd"/><rect x="6" y="4" width="8" height="1" fill="#ddd"/><rect x="6" y="6" width="8" height="1" fill="#ddd"/><rect x="6" y="8" width="8" height="1" fill="#ddd"/></svg>
<div class="t n9" style="left:623px;top:576px;font-size:11px;color:#e8e8e8">Shape Modes:</div>
<div class="a" style="left:660px;top:594px;width:23px;height:23px;background:#626262;border:1px solid #333"></div>
<svg class="a" style="left:620px;top:590px" width="130" height="30">
<g stroke="#c8c8c8" stroke-width="1" fill="none">
<rect x="9.5" y="9.5" width="9" height="9" fill="#888"/><rect x="12.5" y="12.5" width="9" height="9" fill="#888"/>
<rect x="44.5" y="9.5" width="9" height="9"/><rect x="47.5" y="12.5" width="9" height="9" fill="#6a6a6a" stroke="#999"/>
<rect x="80.5" y="9.5" width="9" height="9"/><rect x="83.5" y="12.5" width="9" height="9"/><rect x="83.5" y="12.5" width="6" height="6" fill="#888" stroke="none"/>
<rect x="116.5" y="9.5" width="9" height="9" fill="#888"/><rect x="119.5" y="12.5" width="9" height="9" fill="#888"/><rect x="120" y="13" width="5" height="5" fill="#4a4a4a" stroke="none"/>
</g></svg>
<div class="a" style="left:767px;top:597px;width:75px;height:18px;background:#4a4a4a;border:1px solid #3a3a3a;box-shadow:inset 0 0 0 1px #555"></div>
<div class="t" style="left:787px;top:600px;font-size:11px;color:#8c8c8c">Expand</div>
<div class="t" style="left:622px;top:624px;font-size:11px;color:#e8e8e8">P</div>
<svg class="a" style="left:620px;top:640px" width="220" height="30">
<g stroke="#aaa" stroke-width="1" fill="none">
<rect x="12.5" y="7.5" width="6" height="6"/><rect x="15.5" y="10.5" width="6" height="6"/><rect x="19.5" y="14.5" width="6" height="6"/>
<rect x="49.5" y="7.5" width="6" height="6" fill="#999"/><rect x="55.5" y="13.5" width="8" height="8" fill="#999"/><rect x="49.5" y="13.5" width="6" height="3" fill="#999"/>
<rect x="85.5" y="7.5" width="10" height="10" fill="#aaa"/><rect x="90.5" y="12.5" width="9" height="9" fill="#999"/>
<rect x="124.5" y="9.5" width="10" height="10" fill="#555" stroke="#555"/><rect x="126.5" y="12.5" width="10" height="9" fill="#888" stroke="#777"/>
<rect x="161.5" y="7.5" width="9" height="9"/><rect x="165.5" y="11.5" width="9" height="9"/><rect x="164.5" y="10.5" width="4" height="4"/>
<rect x="199.5" y="8.5" width="10" height="10" stroke="#666"/><rect x="203.5" y="12.5" width="9" height="9"/>
</g></svg>

<!-- tooltip -->
<div class="a" style="left:626px;top:618px;width:398px;height:17px;background:#ffffe1;border:1px solid #000"></div>
<div class="t" style="left:629px;top:621px;font-size:11px;color:#000;letter-spacing:-0.1px">Minus Front (Alt-click to create a Compound Shape and subtract from shape area)</div>

<!-- taskbar -->
<div class="a" style="left:0;top:734px;width:1024px;height:34px;background:linear-gradient(180deg,#3c7ef4 0,#3a86f6 1px,#2b64de 3px,#2558d8 6px,#2454d4 50%,#2352cf 90%,#1e48c0 100%)"></div>
<div class="a" style="left:0;top:738px;width:96px;height:30px;background:linear-gradient(180deg,#5aa85a 0,#3f9a3f 15%,#379437 60%,#2f862f 100%);border-radius:0 12px 12px 0;box-shadow:inset -2px 0 2px #1f6a1f"></div>
<svg class="a" style="left:10px;top:743px" width="22" height="20"><g transform="skewY(-8) translate(0,3)"><path d="M2 2 Q5 0 9 2 L8 9 Q5 7 1 9 Z" fill="#f05a1e"/><path d="M10 2 Q14 3 18 2 L17 9 Q13 10 9 9 Z" fill="#6cc03c"/><path d="M1 10 Q5 8 8 10 L7 17 Q4 15 0 17 Z" fill="#3a8cf0"/><path d="M9 10 Q13 11 17 10 L16 17 Q12 18 8 17 Z" fill="#f8c81c"/></g></svg>
<div class="t" style="left:35px;top:743px;font-size:18px;font-weight:bold;font-style:italic;color:#fff;text-shadow:1px 1px 1px #1a4a1a;transform:scaleX(.9);transform-origin:0 0">пуск</div>
<svg class="a" style="left:104px;top:741px" width="8" height="26"><g fill="#1238a0"><rect x="2" y="1" width="2" height="2"/><rect x="4" y="5" width="2" height="2"/><rect x="2" y="9" width="2" height="2"/><rect x="4" y="13" width="2" height="2"/><rect x="2" y="17" width="2" height="2"/><rect x="4" y="21" width="2" height="2"/></g><g fill="#7aa6f8"><rect x="3" y="2" width="1" height="1"/><rect x="5" y="6" width="1" height="1"/><rect x="3" y="10" width="1" height="1"/><rect x="5" y="14" width="1" height="1"/><rect x="3" y="18" width="1" height="1"/></g></svg>
<svg class="a" style="left:116px;top:743px" width="90" height="22">
<circle cx="10" cy="11" r="8" fill="#2a9a3a" stroke="#fff" stroke-width="1.3"/><path d="M7 7 L7 13 Q7 16 10 16 Q13 16 13 13 L13 7" fill="none" stroke="#fff" stroke-width="2"/>
<rect x="25.5" y="3.5" width="16" height="14" fill="#fff" stroke="#333"/><rect x="26" y="4" width="15" height="3" fill="#1a3aa8"/>
<circle cx="57" cy="11" r="7.5" fill="#db4437"/><path d="M57 11 L64.5 11 A7.5 7.5 0 0 1 53 17.5 Z" fill="#f4c20d"/><path d="M57 11 L53 17.5 A7.5 7.5 0 0 1 50.5 7 Z" fill="#0f9d58"/><circle cx="57" cy="11" r="3.5" fill="#4285f4" stroke="#fff" stroke-width="1.3"/>
<path d="M74 4 Q80 2 84 4 L84 12 L80 12 L80 19 L77 19 L77 12 Q73 11 74 4 Z" fill="#f0a030"/><path d="M75 5 Q78 4 80 6 L80 10 Q76 10 75 5 Z" fill="#fff"/>
</svg>
<svg class="a" style="left:230px;top:744px" width="12" height="8"><path d="M1 1 L4 4 L1 7 M5 1 L8 4 L5 7" fill="none" stroke="#fff" stroke-width="1.2"/></svg>
<svg class="a" style="left:245px;top:741px" width="8" height="26"><g fill="#1238a0"><rect x="2" y="1" width="2" height="2"/><rect x="4" y="5" width="2" height="2"/><rect x="2" y="9" width="2" height="2"/><rect x="4" y="13" width="2" height="2"/><rect x="2" y="17" width="2" height="2"/><rect x="4" y="21" width="2" height="2"/></g></svg>
<div class="a" style="left:257px;top:741px;width:52px;height:25px;background:#1e4cc0;border-radius:3px;box-shadow:inset 1px 1px 2px #0f2f90"></div>
<div class="a" style="left:267px;top:746px;width:17px;height:15px;background:#2a1a08;border:1px solid #f0a030"></div>
<div class="t" style="left:270px;top:749px;font-size:9px;font-weight:bold;color:#f0a030">Ai</div>
<div class="t" style="left:288px;top:748px;font-size:12px;color:#fff">U</div>
<div class="a" style="left:310px;top:741px;width:50px;height:25px;background:#3c81f3;border-radius:3px;box-shadow:inset 0 1px 1px #6aa0ff"></div>
<svg class="a" style="left:318px;top:745px" width="18" height="18"><circle cx="9" cy="9" r="7.5" fill="#e4e6ee" stroke="#2a8a2a" stroke-width="1.8"/><path d="M5.5 13 L5.5 10 M8 13 L8 8 M10.5 13 L10.5 6.5 M13 13 L13 5.5" stroke="#5a2a9a" stroke-width="1.3"/></svg>
<div class="t" style="left:338px;top:748px;font-size:12px;color:#fff">M</div>
<div class="a" style="left:740px;top:739px;width:15px;height:12px;background:#2a5ee0;border:1px solid #5a8ef0;border-radius:2px"></div>
<div class="a" style="left:740px;top:752px;width:15px;height:15px;background:#2a5ee0;border:1px solid #5a8ef0;border-radius:2px"></div>
<svg class="a" style="left:740px;top:739px" width="16" height="28"><path d="M4 8 L8 4 L12 8 M4 19 L8 23 L12 19" fill="none" stroke="#e8f0ff" stroke-width="1.8"/></svg>
<div class="a" style="left:769px;top:738px;width:255px;height:30px;background:linear-gradient(180deg,#0c8ce8 0,#14a0f0 2px,#0f96ec 40%,#0d8fe6 100%);border-left:1px solid #0a3ca8"></div>
<div class="a" style="left:781px;top:745px;width:14px;height:13px;background:#c8161c;border:1px solid #7a0a0a"></div>
<svg class="a" style="left:782px;top:746px" width="12" height="11"><path d="M2 10 L5 1 L7 1 L10 10 L8 10 L6 5 L5 8 L6 8 L7 10 Z" fill="#fff"/></svg>
<svg class="a" style="left:814px;top:743px" width="170" height="20">
<g fill="#6cc040" stroke="#3a8a20" stroke-width=".5"><circle cx="6" cy="5" r="2.8"/><circle cx="11" cy="4" r="2.8"/><circle cx="15" cy="7" r="2.8"/><circle cx="15" cy="13" r="2.8"/><circle cx="10.5" cy="15.5" r="2.8"/><circle cx="5" cy="13" r="2.8"/><circle cx="3.5" cy="8.5" r="2.8"/></g><ellipse cx="9.5" cy="9.5" rx="5.5" ry="4.5" fill="#f4e81c"/><path d="M7 10.5 Q9.5 13 12 10.5" stroke="#333" fill="none" stroke-width="1"/><circle cx="7.5" cy="8" r=".8" fill="#333"/><circle cx="11.5" cy="8" r=".8" fill="#333"/>
<path d="M22 7 L25 7 L30 2.5 L30 17.5 L25 13 L22 13 Z" fill="#c8502a" stroke="#3a1a0a" stroke-width="1"/><path d="M32 5 Q34.5 10 32 15 M34.5 3 Q38 10 34.5 17" stroke="#4a1a0a" fill="none" stroke-width="1.2"/>
<circle cx="46" cy="10" r="7.8" fill="#48b838"/><circle cx="46" cy="10" r="6.5" fill="#d8f0d0"/><circle cx="47" cy="11" r="5" fill="#6a2ac8"/><circle cx="45.5" cy="9" r="1.5" fill="#c8b0ff"/>
<rect x="62" y="2" width="8" height="7" fill="#b8d8f8" stroke="#4a7ab8"/><rect x="56" y="6" width="8" height="7" fill="#b8d8f8" stroke="#4a7ab8"/><rect x="56" y="14" width="8" height="3" fill="#e0e0e0"/><rect x="62" y="10" width="7" height="3" fill="#d0d0d0"/>
<circle cx="80" cy="9" r="6" fill="#9a9a9a"/><circle cx="80" cy="9" r="3.5" fill="#555"/><circle cx="79" cy="8" r="1" fill="#ccc"/><path d="M84 16 Q87 15 89 12 M82 17 Q86 17 90 14" stroke="#8a9ad8" fill="none"/>
<path d="M94 13 L102 8 L106 11 L98 17 Z" fill="#9a9a9a" stroke="#555" stroke-width=".6"/><path d="M96 2 L100 2 L100 6 L103 6 L98 11 L93 6 L96 6 Z" fill="#3aa83a" transform="rotate(-20 98 6)"/>
<rect x="110" y="2" width="16" height="15" fill="#e01818"/><path d="M114 12 Q112 6 118 4 L117 6 M122 7 Q124 13 118 15 L119 13" stroke="#fff" stroke-width="2.2" fill="none"/><path d="M116 11 L120 6" stroke="#fff" stroke-width="1.5"/>
<rect x="129" y="6" width="11" height="9" fill="#f0d050" stroke="#a88010" stroke-width=".8"/><path d="M129 6 L133 6 L134 5 L129 5 Z" fill="#f0d050"/><path d="M137 3 L143 3 L143 14 L137 14 M140 14 L140 17 L136 17" stroke="#3a6ab8" fill="none" stroke-width="1.2"/>
<circle cx="153" cy="10" r="6.5" fill="#2a4aa8" stroke="#8aa0e0" stroke-width="1"/><path d="M150 8 Q153 5 156 8 Q153 9 153 12" stroke="#fff" fill="none" stroke-width="1.3"/><path d="M157 13 L162 17" stroke="#666" stroke-width="2.2"/>
</svg>
<div class="t" style="left:983px;top:747px;font-size:12px;color:#fff">14:07</div>
</body></html>
